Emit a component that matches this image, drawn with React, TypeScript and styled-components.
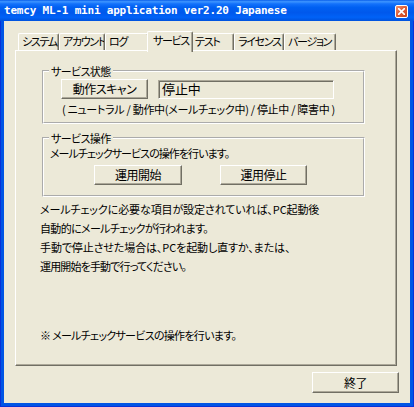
import React from "react";
import styled, { createGlobalStyle } from "styled-components";

const FACE = "#ECE9D8";
const SHADOW = "#ACA899";
const DARK = "#716F64";
const JP = `"Noto Sans CJK JP", "Noto Sans", sans-serif`;

const Global = createGlobalStyle`
  html, body { margin: 0; padding: 0; background: #fff; }
  body { width: 414px; height: 407px; overflow: hidden; }
  #root { width: 414px; height: 407px; }
`;

const Window = styled.div`
  width: 414px;
  height: 407px;
  box-sizing: border-box;
  display: flex;
  flex-direction: column;
  background: #0055e5;
  box-shadow: inset 0 0 0 1px #0831d9;
  font-family: ${JP};
  font-size: 11px;
  letter-spacing: -0.1px;
  font-feature-settings: "palt" 1;
  color: #000;
`;

const TitleBar = styled.div`
  flex: none;
  height: 21px;
  display: flex;
  align-items: center;
  justify-content: space-between;
  padding: 0 6px 0 4px;
  background: linear-gradient(
    #0a5fea 0%,
    #3d95ff 8%,
    #1472fb 18%,
    #0060f2 35%,
    #0058ec 60%,
    #0062f7 82%,
    #0052dd 100%
  );
`;

const Title = styled.span`
  font-family: "DejaVu Sans Mono", "Liberation Mono", monospace;
  font-weight: bold;
  font-size: 11px;
  letter-spacing: -0.2px;
  color: #fff;
  white-space: pre;
  font-feature-settings: normal;
`;

const CloseButton = styled.div`
  width: 13px;
  height: 13px;
  box-sizing: border-box;
  margin-top: 1px;
  border: 1px solid #fff;
  border-radius: 2px;
  background: linear-gradient(135deg, #f0916c 0%, #e0603a 45%, #c9431c 100%);
  display: flex;
  align-items: center;
  justify-content: center;
`;

const Client = styled.div`
  flex: 1;
  margin: 0 4px 4px 4px;
  background: ${FACE};
  display: flex;
  flex-direction: column;
  padding: 10px 11px 0 11px;
`;

const TabRow = styled.div`
  height: 19px;
  display: flex;
  align-items: flex-end;
  padding-left: 3px;
  margin-right: 2px;
`;

const Tab = styled.div<{ $w: number; $active?: boolean }>`
  flex: none;
  box-sizing: border-box;
  width: ${(p) => p.$w + (p.$active ? 4 : 0)}px;
  height: ${(p) => (p.$active ? 21 : 17)}px;
  margin: ${(p) => (p.$active ? "0 -2px -2px -2px" : "0")};
  padding: ${(p) => (p.$active ? "1px 0 0 5px" : "0 0 0 3px")};
  border-left: 1px solid #fff;
  border-top: 1px solid #fff;
  border-right: 1px solid ${DARK};
  border-radius: 2px 2px 0 0;
  box-shadow: inset -1px 0 0 ${SHADOW};
  background: ${FACE};
  line-height: 15px;
  letter-spacing: -1.3px;
  white-space: pre;
  overflow: hidden;
  position: ${(p) => (p.$active ? "relative" : "static")};
  z-index: ${(p) => (p.$active ? 1 : 0)};
`;

const Panel = styled.div`
  flex: none;
  height: 316px;
  margin-right: 2px;
  box-sizing: border-box;
  border-top: 1px solid #fff;
  border-left: 1px solid #fff;
  border-right: 1px solid ${DARK};
  border-bottom: 1px solid ${DARK};
  box-shadow: inset -1px -1px 0 ${SHADOW};
  padding: 13px 0 0 24px;
  display: flex;
  flex-direction: column;
`;

const Group = styled.fieldset<{ $gap?: number }>`
  margin: ${(p) => p.$gap ?? 0}px 0 0 2px;
  width: 323px;
  box-sizing: border-box;
  border: 2px groove #fff;
  padding: 0;
  min-width: 0;
`;

const Legend = styled.legend`
  margin-left: 5px;
  padding: 0 2px;
  line-height: 14px;
  letter-spacing: -0.6px;
`;

const Row = styled.div<{ $top: number; $left: number; $gap?: number }>`
  display: flex;
  align-items: flex-start;
  margin: ${(p) => p.$top}px 0 0 ${(p) => p.$left}px;
  gap: ${(p) => p.$gap ?? 0}px;
`;

const Button = styled.div<{ $w?: number; $h?: number }>`
  flex: none;
  box-sizing: border-box;
  width: ${(p) => p.$w ?? 87}px;
  height: ${(p) => p.$h ?? 20}px;
  border: 1px solid;
  border-color: #fff ${DARK} ${DARK} #fff;
  box-shadow: inset -1px -1px 0 ${SHADOW};
  background: ${FACE};
  display: flex;
  align-items: center;
  justify-content: center;
  padding-bottom: 1px;
  font-size: 12px;
  letter-spacing: -0.5px;
`;

const Edit = styled.div`
  flex: none;
  box-sizing: border-box;
  width: 176px;
  height: 19px;
  margin-top: 1px;
  border: 1px solid;
  border-color: ${SHADOW} #fff #fff ${SHADOW};
  box-shadow: inset 1px 1px 0 ${DARK};
  background: ${FACE};
  padding-left: 3px;
  line-height: 16px;
  font-size: 13px;
`;

const Line = styled.div<{ $top?: number; $left?: number; $bottom?: number; $ls?: number }>`
  margin: ${(p) => p.$top ?? 0}px 0 ${(p) => p.$bottom ?? 0}px ${(p) => p.$left ?? 0}px;
  line-height: 14px;
  letter-spacing: ${(p) => p.$ls ?? -0.1}px;
  white-space: pre;
`;

const Paragraph = styled.div<{ $top: number }>`
  margin-top: ${(p) => p.$top}px;
  line-height: 19px;
  white-space: pre;
`;

const ParaLine = styled.div<{ $ls: number }>`
  letter-spacing: ${(p) => p.$ls}px;
`;

const Footer = styled.div`
  display: flex;
  justify-content: flex-end;
  margin-top: 6px;
`;

const tabs: { label: string; w: number; active?: boolean }[] = [
  { label: "システム", w: 41 },
  { label: "アカウント", w: 46 },
  { label: "ログ", w: 44 },
  { label: "サービス", w: 42, active: true },
  { label: "テスト", w: 43 },
  { label: "ライセンス", w: 50 },
  { label: "バージョン", w: 52 },
];

const paragraph: { text: string; ls: number }[] = [
  { text: "メールチェックに必要な項目が設定されていれば、PC起動後", ls: -0.1 },
  { text: "自動的にメールチェックが行われます。", ls: -0.65 },
  { text: "手動で停止させた場合は、PCを起動し直すか、または、", ls: -0.1 },
  { text: "運用開始を手動で行ってください。", ls: -0.85 },
];

export default function App() {
  return (
    <>
      <Global />
      <Window>
        <TitleBar>
          <Title>temcy ML-1 mini application ver2.20 Japanese</Title>
          <CloseButton>
            <svg width="7" height="7" viewBox="0 0 7 7">
              <path d="M0.5 0.5 L6.5 6.5 M6.5 0.5 L0.5 6.5" stroke="#fff" strokeWidth="1.6" strokeLinecap="square" />
            </svg>
          </CloseButton>
        </TitleBar>
        <Client>
          <TabRow>
            {tabs.map((t) => (
              <Tab key={t.label} $w={t.w} $active={t.active}>
                {t.label}
              </Tab>
            ))}
          </TabRow>
          <Panel>
            <Group>
              <Legend>サービス状態</Legend>
              <Row $top={1} $left={17} $gap={10}>
                <Button>動作スキャン</Button>
                <Edit>停止中</Edit>
              </Row>
              <Line $top={3} $left={18} $bottom={6} $ls={-0.3}>
                ( ニュートラル / 動作中(メールチェック中) / 停止中 / 障害中 )
              </Line>
            </Group>
            <Group $gap={7}>
              <Legend>サービス操作</Legend>
              <Line $top={1} $left={6} $ls={-0.95}>
                メールチェックサービスの操作を行います。
              </Line>
              <Row $top={5} $left={50} $gap={38}>
                <Button $w={88}>運用開始</Button>
                <Button>運用停止</Button>
              </Row>
              <Line $top={10} />
            </Group>
            <Paragraph $top={3}>
              {paragraph.map((l) => (
                <ParaLine key={l.text} $ls={l.ls}>
                  {l.text}
                </ParaLine>
              ))}
            </Paragraph>
            <Paragraph $top={50}>
              <ParaLine $ls={-0.7}>※ メールチェックサービスの操作を行います。</ParaLine>
            </Paragraph>
          </Panel>
          <Footer>
            <Button $h={21}>終了</Button>
          </Footer>
        </Client>
      </Window>
    </>
  );
}
